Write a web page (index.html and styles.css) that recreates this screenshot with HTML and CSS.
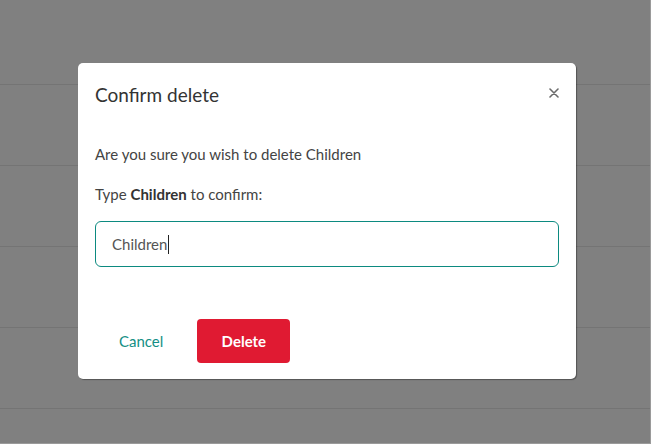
FILE: index.html
```html
<!DOCTYPE html>
<html>
<head>
<meta charset="utf-8">
<link rel="stylesheet" href="styles.css">
</head>
<body>
<div class="backdrop">
  <div class="rows">
    <div class="row first"></div>
    <div class="row"></div>
    <div class="row"></div>
    <div class="row"></div>
    <div class="row"></div>
    <div class="row"></div>
  </div>
  <div class="modal">
    <div class="modal-header">
      <h2 class="modal-title">Confirm delete</h2>
      <button class="close" aria-label="Close">
        <svg width="10" height="10" viewBox="0 0 10 10"><path d="M1 1L9 9M9 1L1 9" stroke="#6b6b6b" stroke-width="1.6" stroke-linecap="round"/></svg>
      </button>
    </div>
    <div class="modal-body">
      <p class="msg">Are you sure you wish to delete Children</p>
      <p class="label">Type <strong>Children</strong> to confirm:</p>
      <div class="input"><span class="value">Children</span><span class="caret"></span></div>
    </div>
    <div class="modal-footer">
      <button class="btn-cancel">Cancel</button>
      <button class="btn-delete">Delete</button>
    </div>
  </div>
</div>
</body>
</html>
```
FILE: styles.css
```css
html, body {
  margin: 0;
  padding: 0;
  width: 651px;
  height: 444px;
  overflow: hidden;
  font-family: "Lato", "Liberation Sans", sans-serif;
}
.backdrop {
  position: relative;
  width: 651px;
  height: 444px;
  overflow: hidden;
  background: #808080;
  box-sizing: border-box;
  border-right: 1px solid #9a9a9a;
  border-bottom: 1px solid #9a9a9a;
}
.rows {
  display: flex;
  flex-direction: column;
  height: 100%;
  overflow: hidden;
}
.row {
  flex: none;
  height: 80px;
  border-bottom: 1px solid #747474;
}
.row.first {
  height: 84px;
}
.modal {
  position: absolute;
  left: 78px;
  top: 63px;
  width: 498px;
  height: 316px;
  background: #fff;
  border-radius: 5px;
  box-shadow: 1px 1px 1px rgba(0,0,0,0.35);
  display: flex;
  flex-direction: column;
  box-sizing: border-box;
}
.modal-header {
  display: flex;
  align-items: center;
  justify-content: space-between;
  padding: 18px 17px 0 17px;
  height: 26px;
}
.modal-title {
  margin: 0;
  font-size: 19px;
  font-weight: 400;
  color: #333;
}
.close {
  border: 0;
  background: none;
  padding: 0;
  display: flex;
  margin-top: -3px;
}
.modal-body {
  padding: 37px 17px 0 17px;
}
.msg {
  margin: 0;
  font-size: 15px;
  color: #444;
  line-height: 20px;
}
.label {
  margin: 20px 0 0 0;
  font-size: 15px;
  color: #444;
  line-height: 20px;
}
.label strong {
  color: #333;
  font-weight: 700;
}
.input {
  margin-top: 17px;
  height: 46px;
  box-sizing: border-box;
  border: 1px solid #0c8a80;
  border-radius: 6px;
  display: flex;
  align-items: center;
  padding-left: 16px;
  font-size: 15px;
  color: #555;
}
.caret {
  display: inline-block;
  width: 1px;
  height: 19px;
  background: #222;
  margin-left: 1px;
}
.modal-footer {
  display: flex;
  align-items: center;
  padding: 0 0 0 19px;
  margin-top: auto;
  margin-bottom: 16px;
}
.btn-cancel {
  border: 0;
  background: none;
  font-family: inherit;
  font-size: 15px;
  color: #158f85;
  padding: 0 22px;
  height: 44px;
}
.btn-delete {
  border: 0;
  background: #e01a32;
  color: #fff;
  font-family: inherit;
  font-weight: 700;
  font-size: 15px;
  width: 93px;
  height: 44px;
  border-radius: 4px;
  margin-left: 12px;
}
```
